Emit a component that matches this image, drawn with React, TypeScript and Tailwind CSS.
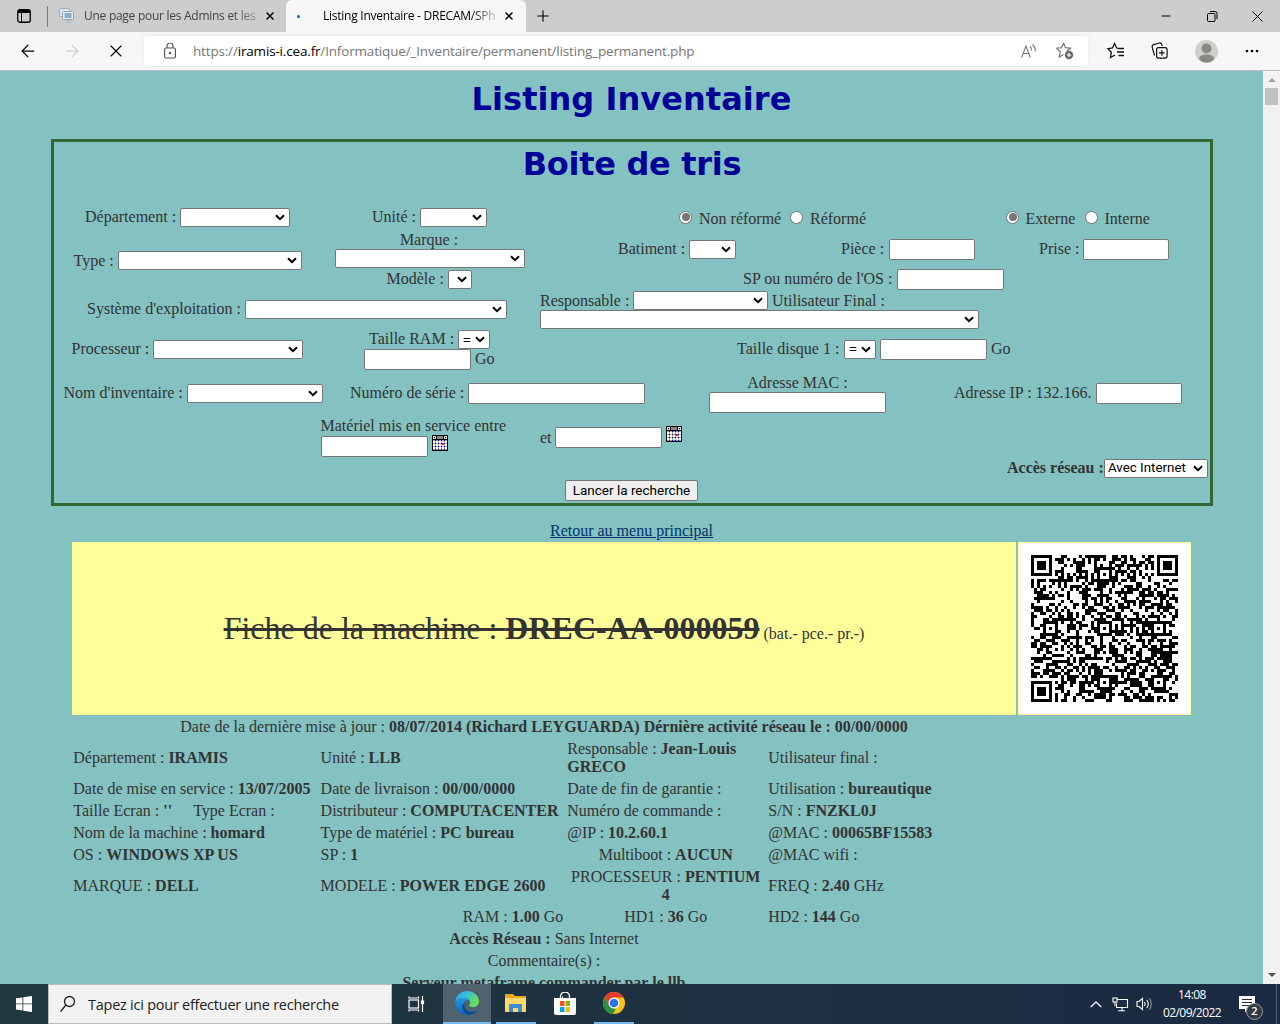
import React from 'react';
import { Minus, X, Plus, ArrowLeft, ArrowRight } from 'lucide-react';

function Sel({ w, text = '' }: { w: string; text?: string }) {
  return (
    <span className={`flex h-[19px] shrink-0 items-center justify-between rounded-[2px] border border-[#767676] bg-white pl-[3px] pr-[4px] font-['Liberation_Sans'] text-[13.33px] leading-none text-black ${w}`}>
      <span className={text.length > 1 ? 'whitespace-nowrap font-[Roboto] text-[13.33px]' : 'pl-px'}>{text}</span>
      <svg className="shrink-0" width="10" height="7" viewBox="0 0 10 7"><path d="M1 1.2 5 5.2 9 1.2" fill="none" stroke="#000" strokeWidth="2" /></svg>
    </span>
  );
}

function Inp({ w }: { w: string }) {
  return <input className={`block h-[21px] shrink-0 rounded-[2px] border border-[#767676] bg-white px-1 ${w}`} />;
}

function Radio({ on, m }: { on?: boolean; m: string }) {
  return (
    <span className={`mb-px flex size-[13px] shrink-0 items-center justify-center rounded-full border border-[#767676] bg-white ${m}`}>
      {on && <span className="size-[8px] rounded-full bg-[#767676]" />}
    </span>
  );
}

function T({ c, children }: { c: string; children: React.ReactNode }) {
  return <span className={`block shrink-0 whitespace-nowrap leading-[18px] ${c}`}>{children}</span>;
}

function Cal({ m }: { m: string }) {
  return (
    <svg className={`shrink-0 ${m}`} width="16" height="16" viewBox="0 0 16 16" shapeRendering="crispEdges">
      <rect width="16" height="16" fill="#000" />
      <rect x="1" y="5" width="14" height="10" fill="#fff" />
      {[5, 8, 11, 14].map((y) => <path key={y} d={`M1 ${y + 0.5}h14`} stroke="#a8a8a8" />)}
      {[3, 6, 9, 12].map((x) => <path key={x} d={`M${x + 0.5} 5v10`} stroke="#a8a8a8" />)}
      {[5, 8, 11, 14].map((y) => <path key={y} d={`M3 ${y + 0.5}h11`} stroke="#0000d0" strokeDasharray="1 2" />)}
      <rect x="1" y="1" width="3" height="3" fill="#ddd" /><rect x="2" y="2" width="1" height="1" fill="#000" />
      <rect x="5" y="1" width="6" height="3" fill="#888" />
      <rect x="12" y="1" width="3" height="3" fill="#ddd" /><rect x="13" y="2" width="1" height="1" fill="#000" />
      <rect x="10" y="8" width="2" height="2" fill="#f00" /><rect x="11" y="8" width="1" height="1" fill="#fc0" />
    </svg>
  );
}

const N = 49;
const inBox = (x: number, y: number, cx: number, cy: number, r: number) => Math.max(Math.abs(x - cx), Math.abs(y - cy)) <= r;
function qrDark(x: number, y: number, rnd: number) {
  for (const [cx, cy] of [[3, 3], [45, 3], [3, 45]]) {
    if (inBox(x, y, cx, cy, 4)) {
      const d = Math.max(Math.abs(x - cx), Math.abs(y - cy));
      return d === 3 || d <= 1;
    }
  }
  for (const [cx, cy] of [[24, 6], [6, 24], [24, 24], [42, 24], [24, 42], [42, 42]]) {
    if (inBox(x, y, cx, cy, 2)) return Math.max(Math.abs(x - cx), Math.abs(y - cy)) !== 1;
  }
  if (x === 6) return y % 2 === 0;
  if (y === 6) return x % 2 === 0;
  return rnd > 0.49;
}
function Qr() {
  let d = '';
  let s = 59;
  for (let y = 0; y < N; y++) for (let x = 0; x < N; x++) {
    s = (s * 16807) % 2147483647;
    if (qrDark(x, y, s / 2147483647)) d += `M${x} ${y}h1v1h-1z`;
  }
  return <svg width="147" height="147" viewBox="0 0 49 49" shapeRendering="crispEdges"><path d={d} fill="#000" /></svg>;
}

function Chrome() {
  return (
    <header className="font-['Open_Sans']">
      <div className="flex h-8 items-center bg-[#cdcdcd] text-[12px] text-black">
        <svg className="ml-[17px]" width="14" height="14" viewBox="0 0 14 14"><rect x=".75" y=".75" width="12.5" height="12.5" rx="2" fill="none" stroke="#000" strokeWidth="1.3" /><path d="M1 1h12v3H5v9H4V4H1z" fill="#000" /></svg>
        <span className="ml-4 h-[21px] w-px bg-[#777]" />
        <svg className="ml-[11px]" width="16" height="16" viewBox="0 0 16 16"><rect x=".5" y=".5" width="10" height="8" rx="1" fill="#dde5ec" stroke="#9daab8" /><rect x="3.5" y="3.5" width="11" height="8" rx="1" fill="#e9eef2" stroke="#91a0af" /><rect x="5.5" y="5" width="7" height="5" fill="#83add4" /><path d="M8 12h3v2h2v1H6v-1h2z" fill="#b5bdc5" /></svg>
        <span className="ml-[9px] w-[173px] whitespace-nowrap tracking-[-0.27px] text-[#444] [mask-image:linear-gradient(to_right,#000_85%,#0006)]">Une page pour les Admins et les</span>
        <X className="ml-[7px]" size={12} strokeWidth={3} />
        <div className="ml-[10px] flex h-8 w-[240px] items-center rounded-t-[6px] bg-[#f7f7f7]">
          <span className="ml-[11px] size-[3px] rounded-full bg-[#0067c0]" />
          <span className="ml-[23px] w-[174px] whitespace-nowrap tracking-[-0.25px] [mask-image:linear-gradient(to_right,#000_85%,#0002)]">Listing Inventaire - DRECAM/SPh</span>
          <X className="ml-[6px]" size={12} strokeWidth={3} />
        </div>
        <Plus className="ml-[8px]" size={18} strokeWidth={1.5} />
        <span className="flex-1" />
        <Minus size={14} strokeWidth={1.7} className="mr-[34px]" />
        <svg className="mr-[34px]" width="11" height="11" viewBox="0 0 11 11" fill="none" stroke="#000"><rect x=".5" y="2.5" width="7.5" height="8" rx="1" /><path d="M3 .5h5a2 2 0 0 1 2 2V8" /></svg>
        <svg className="mr-[17px]" width="11" height="11" viewBox="0 0 11 11" stroke="#000"><path d="M.5.5l10 10M10.500.5l-10 10" /></svg>
      </div>
      <div className="flex h-[39px] items-center border-b border-[#bdbdbd] bg-[#f7f7f7]">
        <ArrowLeft className="ml-[18px]" size={20} strokeWidth={1.5} />
        <ArrowRight className="ml-[24px] text-[#cecece]" size={20} strokeWidth={1.5} />
        <X className="ml-[24px]" size={20} strokeWidth={1.3} />
        <div className="ml-[18px] flex h-[30px] w-[944px] items-center rounded-[4px] bg-white shadow-[0_0_4px_#e5e5e5]">
          <svg className="ml-[20px]" width="12" height="16" viewBox="0 0 12 16" fill="none" stroke="#555" strokeWidth="1.2"><rect x=".6" y="5" width="10.800" height="10" rx="1.500" /><path d="M3 5V3a3 3 0 0 1 6 0v2" /><circle cx="6" cy="10" r=".6" fill="#555" /></svg>
          <span className="ml-[17px] w-[820px] whitespace-nowrap text-[13.500px] tracking-[-0.17px] text-[#767676]">https://<span className="text-black">iramis-i.cea.fr</span>/Informatique/_Inventaire/permanent/listing_permanent.php</span>
          <svg className="ml-[8px] shrink-0" width="16" height="15" viewBox="0 0 16 15" fill="none" stroke="#767676" strokeWidth="1.1"><path d="M.7 13.500 5 2l4.300 11.500M2.200 9.500h5.600M9 2.500q2 2 1.500 4M11.500.5q3.500 3 2.500 7" /></svg>
          <svg className="ml-[19px] shrink-0" width="18" height="18" viewBox="0 0 18 18" fill="none" stroke="#767676" strokeWidth="1.200"><path d="m7.500 1 2 4.700 5 .5-3.800 3.300M7.500 1l-2 4.700-5 .5 3.800 3.500-1 5.300 4.200-2.500" /><circle cx="13" cy="13" r="4.200" fill="#666" stroke="none" /><path d="M10.800 13h4.400M13 10.800v4.400" stroke="#fff" /></svg>
        </div>
        <svg className="ml-[19px]" width="18" height="18" viewBox="0 0 18 18" fill="none" stroke="#111" strokeWidth="1.300"><path d="M10 6.500 7.500 1.500 5.500 6l-4.700.7 3.500 3.500-.8 5.300L8 13M10.500 6.500H17M10 10h7M11.500 13.500H17" /></svg>
        <svg className="ml-[26px]" width="18" height="18" viewBox="0 0 18 18" fill="none" stroke="#111" strokeWidth="1.200"><path d="M3.500 13.500 1.200 5.200a2 2 0 0 1 1.400-2.500L8.500 1a2 2 0 0 1 2.300 1.500l.5 1.500" /><rect x="5.600" y="5.600" width="10.500" height="10.500" rx="2" /><path d="M10.850 8v5.700M8 10.850h5.700" /></svg>
        <svg className="ml-[26px]" width="23" height="23" viewBox="0 0 23 23"><circle cx="11.500" cy="11.500" r="11.500" fill="#d1cfcc" /><circle cx="11.500" cy="8.500" r="5" fill="#8b8783" /><path d="M4 19q0-4.500 7.500-4.500T19 19q-3 3.500-7.500 3.500T4 19" fill="#8b8783" /></svg>
        <svg className="ml-[27px]" width="14" height="4" viewBox="0 0 14 4"><circle cx="2" cy="2" r="1.300" /><circle cx="7" cy="2" r="1.300" /><circle cx="12" cy="2" r="1.300" /></svg>
      </div>
    </header>
  );
}

function Filters() {
  return (
    <section className="ml-[51px] h-[367px] w-[1162px] border-[3px] border-[#336633]">
      <h1 className="h-[64px] pt-[3px] text-center font-['DejaVu_Sans'] text-[32px] font-bold leading-[39px] tracking-[-0.3px] text-[#000099]">Boite de tris</h1>
      <div className="flex h-[23px] items-center">
        <T c="ml-[31px] w-[95px] pb-px">Département :</T><Sel w="w-[110px]" />
        <T c="ml-[82px] w-[48px] pb-px">Unité :</T><Sel w="w-[67px]" />
        <Radio on m="ml-[192px]" /><T c="ml-[7px] w-[91px] pt-[3px]">Non réformé</T>
        <Radio m="" /><T c="ml-[7px] w-[196px] pt-[3px]">Réformé</T>
        <Radio on m="" /><T c="ml-[6.5px] w-[59.5px] pt-[3px]">Externe</T>
        <Radio m="" /><T c="ml-[6.5px] pt-[3px]">Interne</T>
      </div>
      <div className="flex h-[61px]">
        <div className="flex h-[62px] items-center">
          <T c="ml-[19.5px] w-[44.5px] pt-px">Type :</T><Sel w="w-[184px]" />
        </div>
        <div className="ml-[33px] flex w-[190px] flex-col items-center pt-[2px]">
          <T c="mr-[2px]">Marque :</T><Sel w="w-[190px]" />
          <div className="mr-[2px] mt-[2px] flex"><T c="w-[61px]">Modèle :</T><Sel w="w-[24px]" /></div>
        </div>
        <div className="flex flex-1 flex-col">
          <div className="flex h-[41px] items-center">
            <T c="ml-[93px] w-[71px] pb-px">Batiment :</T><Sel w="w-[47px]" />
            <T c="ml-[105px] w-[48px] pb-px">Pièce :</T><Inp w="w-[86px]" />
            <T c="ml-[64px] w-[44px] pb-px">Prise :</T><Inp w="w-[86px]" />
          </div>
          <div className="-mt-[1px] flex h-[21px] items-center"><T c="ml-[218px] w-[154px] pb-px">SP ou numéro de l'OS :</T><Inp w="w-[107px]" /></div>
        </div>
      </div>
      <div className="flex h-[39px]">
        <div className="flex h-[39px] items-center"><T c="ml-[33px] w-[158px] pb-px">Système d'exploitation :</T><Sel w="w-[262px]" /></div>
        <div className="ml-[33px] pt-px">
          <div className="flex items-center"><T c="w-[93px]">Responsable :</T><Sel w="w-[135px]" /><T c="ml-[4px]">Utilisateur Final :</T></div>
          <Sel w="w-[439px]" />
        </div>
      </div>
      <div className="flex h-[42px]">
        <div className="flex h-[40px] items-center"><T c="ml-[17.5px] w-[81.5px]">Processeur :</T><Sel w="w-[150px]" /></div>
        <div className="ml-[61px] w-[132px] pt-px">
          <div className="flex"><T c="ml-[5px] w-[89px]">Taille RAM :</T><Sel w="w-[32px]" text="=" /></div>
          <div className="flex items-center"><Inp w="w-[107px]" /><T c="ml-[4px] pb-px">Go</T></div>
        </div>
        <div className="flex h-[40px] items-center">
          <T c="ml-[241px] w-[107px]">Taille disque 1 :</T><Sel w="w-[32px]" text="=" /><span className="w-[4px]" /><Inp w="w-[107px]" /><T c="ml-[4px]">Go</T>
        </div>
      </div>
      <div className="flex h-[44px] items-center">
        <T c="ml-[9.5px] w-[123.5px]">Nom d'inventaire :</T><Sel w="w-[136px]" />
        <T c="ml-[27px] w-[118px]">Numéro de série :</T><Inp w="w-[177px]" />
        <div className="ml-[64px] flex w-[177px] flex-col items-center"><T c="">Adresse MAC :</T><Inp w="w-[177px]" /></div>
        <T c="ml-[68px] w-[142px]">Adresse IP : 132.166.</T><Inp w="w-[86px]" />
      </div>
      <div className="flex h-[43px]">
        <div className="ml-[266.5px] w-[219.5px] pt-[2px]">
          <T c="">Matériel mis en service entre</T>
          <div className="flex pl-[0.5px]"><span className="pt-px"><Inp w="w-[107px]" /></span><Cal m="ml-[4px]" /></div>
        </div>
        <div className="flex h-[45px] items-center"><T c="w-[15px]">et</T><Inp w="w-[107px]" /><Cal m="ml-[4px] mb-[7px]" /></div>
      </div>
      <div className="flex h-[20px] items-center justify-end pr-[2px]"><T c="w-[97px] font-bold">Accès réseau :</T><Sel w="w-[104px]" text="Avec Internet" /></div>
      <button className="ml-[511px] mt-[2px] block h-[21px] w-[133px] whitespace-nowrap rounded-[2px] border border-[#767676] bg-[#efefef] font-[Roboto] text-[13.5px] leading-[19px] text-black">Lancer la recherche</button>
    </section>
  );
}

type Cell = React.ReactNode;
const rows: { h: string; c: [Cell, Cell, Cell, Cell] }[] = [
  { h: 'h-[40px]', c: [<>Département : <b>IRAMIS</b></>, <>Unité : <b>LLB</b></>, <>Responsable : <b>Jean-Louis<br />GRECO</b></>, 'Utilisateur final :'] },
  { h: 'h-[22px]', c: [<>Date de mise en service : <b>13/07/2005</b></>, <>Date de livraison : <b>00/00/0000</b></>, 'Date de fin de garantie :', <>Utilisation : <b>bureautique</b></>] },
  { h: 'h-[22px]', c: [<>Taille Ecran : <b>''</b><span className="ml-[21px]">Type Ecran :</span></>, <>Distributeur : <b>COMPUTACENTER</b></>, 'Numéro de commande :', <>S/N : <b>FNZKL0J</b></>] },
  { h: 'h-[22px]', c: [<>Nom de la machine : <b>homard</b></>, <>Type de matériel : <b>PC bureau</b></>, <>@IP : <b>10.2.60.1</b></>, <>@MAC : <b>00065BF15583</b></>] },
  { h: 'h-[22px]', c: [<>OS : <b>WINDOWS XP US</b></>, <>SP : <b>1</b></>, <div className="text-center">Multiboot : <b>AUCUN</b></div>, '@MAC wifi :'] },
  { h: 'h-[40px]', c: [<>MARQUE : <b>DELL</b></>, <>MODELE : <b>POWER EDGE 2600</b></>, <div className="text-center">PROCESSEUR : <b>PENTIUM<br />4</b></div>, <>FREQ : <b>2.40</b> GHz</>] },
  { h: 'h-[22px]', c: ['', <div className="pr-[4px] text-right">RAM : <b>1.00</b> Go</div>, <div className="text-center">HD1 : <b>36</b> Go</div>, <>HD2 : <b>144</b> Go</>] },
];

function Record() {
  return (
    <section className="ml-[72px] w-[1119px]">
      <div className="flex h-[173px] gap-[2px]">
        <div className="flex w-[944px] items-center justify-center whitespace-nowrap bg-[#ffff99] pt-[4px]">
          <div className="leading-[36px]"><span className="text-[32px] line-through">Fiche de la machine : <b>DREC-AA-000059</b></span> (bat.- pce.- pr.-)</div>
        </div>
        <div className="flex w-[173px] items-center justify-center border border-[#ffff99] bg-white"><Qr /></div>
      </div>
      <div className="w-[944px]">
        <div className="h-[23px] whitespace-nowrap text-center leading-[24px]">Date de la dernière mise à jour : <b>08/07/2014 (Richard LEYGUARDA) Dérnière activité réseau le : 00/00/0000</b></div>
        {rows.map((r, i) => (
          <div key={i} className={`grid grid-cols-[247.3px_246.7px_201px_248px] items-center whitespace-nowrap pl-[1.3px] leading-[18px] ${r.h}`}>
            {r.c.map((c, j) => <div key={j} className={j === 2 ? 'w-[197px]' : ''}>{c}</div>)}
          </div>
        ))}
        <div className="text-center leading-[22px]"><b>Accès Réseau :</b> Sans Internet</div>
        <div className="text-center leading-[22px]">Commentaire(s) :</div>
        <div className="text-center font-bold leading-[22px]">Serveur metaframe commander par le llb</div>
      </div>
    </section>
  );
}

function Taskbar() {
  return (
    <footer className="flex h-10 items-center bg-gradient-to-r from-[#213840] to-[#1a2a42] font-['Open_Sans'] text-white">
      <svg className="ml-4 shrink-0" width="16" height="16" viewBox="0 0 16 16" fill="#fff"><path d="M0 2.300 6.500 1.400v6.100H0zM7.300 1.300 16 0v7.500H7.300zM0 8.300h6.500v6.200L0 13.600zM7.300 8.300H16V16l-8.700-1.300z" /></svg>
      <div className="ml-4 flex h-10 w-[344px] shrink-0 items-center border border-[#bbb] bg-[#f2f2f2] text-[#222]">
        <svg className="ml-[10px]" width="18" height="18" viewBox="0 0 18 18" fill="none" stroke="#222" strokeWidth="1.300"><circle cx="10.500" cy="6.500" r="5" /><path d="M7 10 1.500 16.500" /></svg>
        <span className="ml-[11px] whitespace-nowrap pt-[2px] text-[14.500px] tracking-[-0.25px]">Tapez ici pour effectuer une recherche</span>
      </div>
      <svg className="ml-4 shrink-0" width="17" height="16" viewBox="0 0 17 16" fill="none" stroke="#fff" strokeWidth="1.200"><rect x="1" y="4" width="9.500" height="8" /><path d="M1 .5V2h9.500V.5M1 15.500V14h9.500v1.500M14.500 0v16" /><rect x="13.500" y="5" width="2" height="2.500" fill="#fff" /></svg>
      <div className="ml-[18px] flex h-10 w-[48px] shrink-0 items-center justify-center border-b-2 border-[#76b9ed] bg-[#4f636e]">
        <svg width="24" height="24" viewBox="0 0 24 24">
          <defs><linearGradient id="e1" x1="0" y1="0" x2="1" y2=".4"><stop stopColor="#2aa6e0" /><stop offset=".5" stopColor="#35c1d8" /><stop offset="1" stopColor="#6cdf55" /></linearGradient><linearGradient id="e2" x2="0" y2="1"><stop stopColor="#1f9de0" /><stop offset="1" stopColor="#0d5fb8" /></linearGradient></defs>
          <path d="M.3 11C1 4 6 0 12 0c7 0 12 5 12 10.500 0 3.500-2.800 5.600-6 5.600-2.500 0-4-.8-4-1.600 0-.6 1.100-1.200 1.100-3C15.100 9 12.500 7 9 7 5 7 1.500 8.500.3 11" fill="url(#e1)" />
          <path d="M.2 12C.5 8.500 5 7 8.800 7c2 0 4 .8 5 2-3.500-.5-5 2-5 5 0 4 4 6.500 8 6.500 2.700 0 4.500-1.300 5.200-1.500.5-.1.600.3.400.6C20.500 22 16.800 24 12 24 5 24 0 18.700.2 12" fill="url(#e2)" />
          <path d="M9.500 11.500Q6 15 8 19t7 4.700c3-.5 5.700-1.700 7.500-4.200-1.500.9-3.500 1.500-5.500 1.500-4.500 0-9-4-7.500-9.500" fill="#114a8b" />
        </svg>
      </div>
      <div className="ml-px flex h-10 w-[48px] shrink-0 justify-center px-1"><span className="flex h-10 w-10 items-center justify-center border-b-2 border-[#76b9ed]">
        <svg className="shrink-0" width="22" height="20" viewBox="0 0 22 20"><path d="M0 1h8l2 2h11v16H0z" fill="#e8a91b" /><path d="M0 5h21v14H0z" fill="#ffd76a" /><path d="M4 12q0-1 1-1h11q1 0 1 1v7h-4v-4H8v4H4z" fill="#398dd3" /></svg>
      </span></div>
      <div className="ml-px flex h-10 w-[48px] shrink-0 items-center justify-center">
        <svg width="24" height="24" viewBox="0 0 24 24"><path d="M7.500 7V4.500a4.500 4.500 0 0 1 9 0V7M9.500 6V4.500" fill="none" stroke="#fff" strokeWidth="1.300" /><path d="M1 6h22v15q0 2-2 2H3q-2 0-2-2z" fill="#fff" /><path d="M7 9h4.500v5H7z" fill="#f25022" /><path d="M12.500 9H17v5h-4.500z" fill="#7fba00" /><path d="M7 15h4.500v5H7z" fill="#00a4ef" /><path d="M12.500 15H17v5h-4.500z" fill="#ffb900" /></svg>
      </div>
      <div className="ml-px flex h-10 w-[48px] shrink-0 justify-center"><span className="flex h-10 w-10 shrink-0 items-center justify-center border-b-2 border-[#76b9ed]">
        <svg className="shrink-0" width="22" height="22" viewBox="0 0 22 22"><circle cx="11" cy="11" r="11" fill="#fbc116" /><path d="M1.500 5.500A11 11 0 0 1 20.500 5.500H11L6.200 13.800z" fill="#e33b2e" /><path d="M1.500 5.500 6.200 13.800 11 16.500h2L10 22A11 11 0 0 1 1.500 5.500" fill="#229342" /><circle cx="11" cy="11" r="5.500" fill="#fff" /><circle cx="11" cy="11" r="4.300" fill="#2a72e5" /></svg>
      </span></div>
      <span className="flex-1" />
      <svg width="12" height="8" viewBox="0 0 12 8" fill="none" stroke="#fff" strokeWidth="1.300"><path d="m.8 7 5.200-5.200L11.200 7" /></svg>
      <svg className="ml-[10px]" width="17" height="15" viewBox="0 0 17 15" fill="none" stroke="#fff" strokeWidth="1.100"><path d="M5 2.500h10.500v8H4.500v-4M10 10.500v3M6 13.800h7" /><rect x="1" y="1" width="4" height="4" /><path d="M3 5v4" /></svg>
      <svg className="ml-[7px]" width="17" height="14" viewBox="0 0 17 14" fill="none" stroke="#fff" strokeWidth="1.100"><path d="M1 4.500h2l3.500-3v11l-3.500-3H1zM8.500 5q1.500 2 0 4M10.800 3q3 4 0 8" /><path d="M13.300 1.200q4 5.800 0 11.600" stroke="#8292a0" /></svg>
      <div className="ml-[9px] w-[60px] whitespace-nowrap text-center text-[12px] leading-[18px] tracking-[-0.55px]">14:08<br />02/09/2022</div>
      <div className="relative ml-[17px] mr-[12px] mt-[8px] h-[24px] w-[25px]">
        <svg width="17" height="17" viewBox="0 0 17 17"><path d="M0 0h16v13h-7l-3 3.500V13H0z" fill="#fff" /><path d="M3 3.500h10M3 6.500h10M3 9.500h7" stroke="#1a2a42" /></svg>
        <span className="absolute left-[7px] top-[7px] flex size-[17px] items-center justify-center rounded-full border border-[#999] bg-[#333a42] text-[11px] font-semibold">2</span>
      </div>
      <span className="h-10 w-[4px] shrink-0 border-l border-[#58636f]" />
    </footer>
  );
}

export default function App() {
  return (
    <div className="flex h-[1024px] w-[1280px] flex-col overflow-hidden">
      <Chrome />
      <div className="flex h-[913px] overflow-hidden">
        <main className="w-[1263px] overflow-hidden bg-[#84c1c1] font-['Liberation_Serif'] text-[16px] text-[#333]">
          <h1 className="h-[68px] pt-[9px] text-center font-['DejaVu_Sans'] text-[32px] font-bold leading-[39px] tracking-[0.05px] text-[#000099]">Listing Inventaire</h1>
          <Filters />
          <div className="h-[36px] pt-[16px] text-center leading-[18px]"><a className="text-[#003366] underline">Retour au menu principal</a></div>
          <Record />
        </main>
        <aside className="flex w-[17px] flex-col items-center justify-between bg-[#f1f1f1]">
          <div className="flex flex-col items-center">
            <svg className="mt-[7px]" width="8" height="4" viewBox="0 0 8 4"><path d="M0 4 4 0l4 4z" fill="#a3a3a3" /></svg>
            <span className="mt-[6px] h-[17px] w-[13px] bg-[#c1c1c1]" />
          </div>
          <svg className="mb-[7px]" width="8" height="4" viewBox="0 0 8 4"><path d="m0 0 4 4 4-4z" fill="#505050" /></svg>
        </aside>
      </div>
      <Taskbar />
    </div>
  );
}
